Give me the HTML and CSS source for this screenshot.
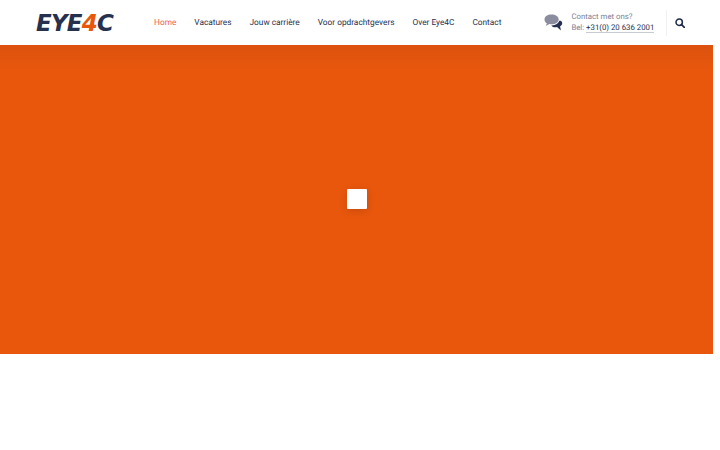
FILE: index.html
```html
<!DOCTYPE html>
<html lang="en">
<head>
  <meta charset="UTF-8">
  <meta name="viewport" content="width=device-width, initial-scale=1.0">
  <title>Eye4C</title>
  <link rel="stylesheet" href="styles.css">
</head>
<body>
  <div class="page">
    <header class="site-header">
      <a class="logo" href="#">EYE<span class="logo-four">4</span>C</a>

      <nav class="main-nav">
        <a class="active" href="#">Home</a>
        <a href="#">Vacatures</a>
        <a href="#">Jouw carrière</a>
        <a href="#">Voor opdrachtgevers</a>
        <a href="#">Over Eye4C</a>
        <a href="#">Contact</a>
      </nav>

      <div class="contact-box">
        <!-- Chat bubbles -->
        <svg class="chat-icon" width="20" height="18" viewBox="0 0 20 18">
          <path fill="#8b8c9e" d="M7.5 0.5C3.4 0.5 0.5 2.6 0.5 5.4c0 1.7 1 3 2.4 3.9L1.8 12l3.6-2c.7.1 1.4.2 2.1.2 4.1 0 7.2-2 7.2-4.8S11.6.5 7.5.5z"/>
          <path fill="#26304f" d="M15.2 6.8c-.6 2.7-3.5 4.5-7.3 4.6-.3 0-.6 0-.7 0 .9 1.2 2.5 1.9 4.3 1.9.5 0 1 0 1.5-.2l3.9 3.3-.8-4.2c1.3-.7 2.1-1.8 2.1-3 0-1-.6-1.8-1.5-2.4z"/>
        </svg>
        <div class="contact-text">
          <span>Contact met ons?</span>
          <span>Bel: <a href="#">+31(0) 20 636 2001</a></span>
        </div>
      </div>

      <button class="search-btn" type="button" aria-label="Zoeken">
        <svg width="10" height="10" viewBox="0 0 10 10">
          <circle cx="4.2" cy="4.2" r="3.2" fill="none" stroke="#1f2a4d" stroke-width="1.5"/>
          <path d="M6.6 6.6L9.3 9.3" stroke="#1f2a4d" stroke-width="1.7" stroke-linecap="round"/>
        </svg>
      </button>
    </header>

    <section class="hero">
      <div class="loader"></div>
    </section>
  </div>
</body>
</html>
```

FILE: styles.css
```css
/* General Styles */
body {
  margin: 0;
  font-family: Roboto, "Noto Sans", sans-serif;
  background-color: #fff;
}

.page {
  width: 713px;
}

a {
  color: inherit;
  text-decoration: none;
}

/* Header */
.site-header {
  display: flex;
  align-items: center;
  height: 45px;
  padding-left: 36px;
  background-color: #fff;
  white-space: nowrap;
}

.logo {
  flex: 0 0 118px;
  font-family: "DejaVu Sans", sans-serif;
  font-size: 23px;
  font-weight: 700;
  font-style: italic;
  letter-spacing: -0.8px;
  color: #26304f;
}

.logo-four {
  color: #e8570e;
}

.main-nav {
  display: flex;
  gap: 18px;
  font-size: 8.3px;
  text-rendering: geometricPrecision;
  color: #26304f;
}

.main-nav .active {
  color: #ee6055;
}

.contact-box {
  display: flex;
  align-items: center;
  gap: 7px;
  margin-left: 43px;
  padding-right: 12px;
  height: 26px;
  border-right: 1px solid #f1f1f3;
}

.chat-icon {
  flex-shrink: 0;
}

.contact-text {
  display: flex;
  flex-direction: column;
  gap: 1px;
  font-size: 7.8px;
  line-height: 10px;
  text-rendering: geometricPrecision;
  color: #7d8296;
}

.contact-text a {
  color: #26304f;
  border-bottom: 1px solid #c9cbd4;
}

.search-btn {
  display: flex;
  margin-left: 8px;
  padding: 0;
  border: none;
  background: none;
  cursor: pointer;
}

/* Hero */
.hero {
  display: flex;
  align-items: center;
  justify-content: center;
  box-sizing: border-box;
  height: 309px;
  padding-bottom: 2px;
  background: linear-gradient(#dc520e, #e9570d 26px);
}

.loader {
  width: 20px;
  height: 20px;
  background-color: #fff;
  border-radius: 1px;
  box-shadow: 0 2px 8px rgba(0, 0, 0, 0.15);
}
```
